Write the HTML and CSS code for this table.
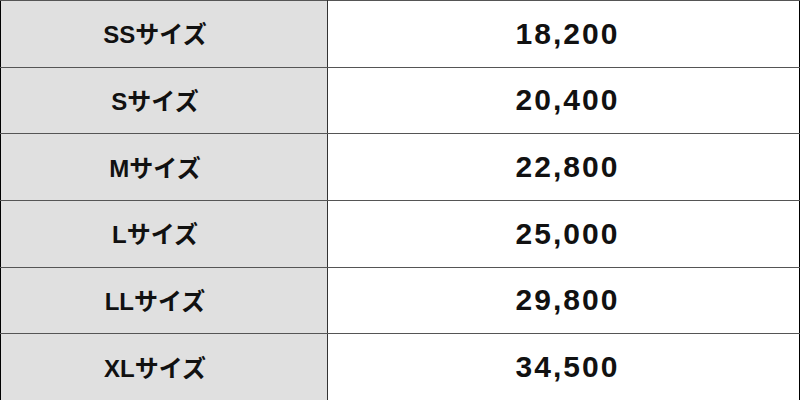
FILE: index.html
```html
<!DOCTYPE html>
<html lang="ja">
<head>
<meta charset="utf-8">
<link rel="stylesheet" href="styles.css">
</head>
<body>
<table class="price-table">
  <tbody>
    <tr><th class="size">SSサイズ</th><td class="price">18,200</td></tr>
    <tr><th class="size">Sサイズ</th><td class="price">20,400</td></tr>
    <tr><th class="size">Mサイズ</th><td class="price">22,800</td></tr>
    <tr><th class="size">Lサイズ</th><td class="price">25,000</td></tr>
    <tr><th class="size">LLサイズ</th><td class="price">29,800</td></tr>
    <tr><th class="size">XLサイズ</th><td class="price">34,500</td></tr>
  </tbody>
</table>
</body>
</html>
```
FILE: styles.css
```css
html, body {
  margin: 0;
  padding: 0;
  background: #ffffff;
}
.price-table {
  width: 800px;
  height: 400px;
  border-collapse: collapse;
  table-layout: fixed;
  border: 1px solid #000;
  font-family: "Liberation Sans", "Noto Sans CJK JP", sans-serif;
  color: #111;
}
.price-table tr {
  height: 66.67px;
}
.price-table th,
.price-table td {
  border-top: 1px solid #555;
  border-bottom: 1px solid #555;
  padding: 0;
  text-align: center;
  vertical-align: middle;
}
.size {
  width: 327px;
  background: #e0e0e0;
  border-right: 1px solid #333;
  font-size: 24px;
  font-weight: 700;
  padding-right: 18px !important;
  padding-bottom: 2px !important;
  box-sizing: border-box;
}
.price {
  background: #fff;
  font-size: 30px;
  font-weight: 700;
  letter-spacing: 2px;
  padding-left: 8px !important;
}
```
